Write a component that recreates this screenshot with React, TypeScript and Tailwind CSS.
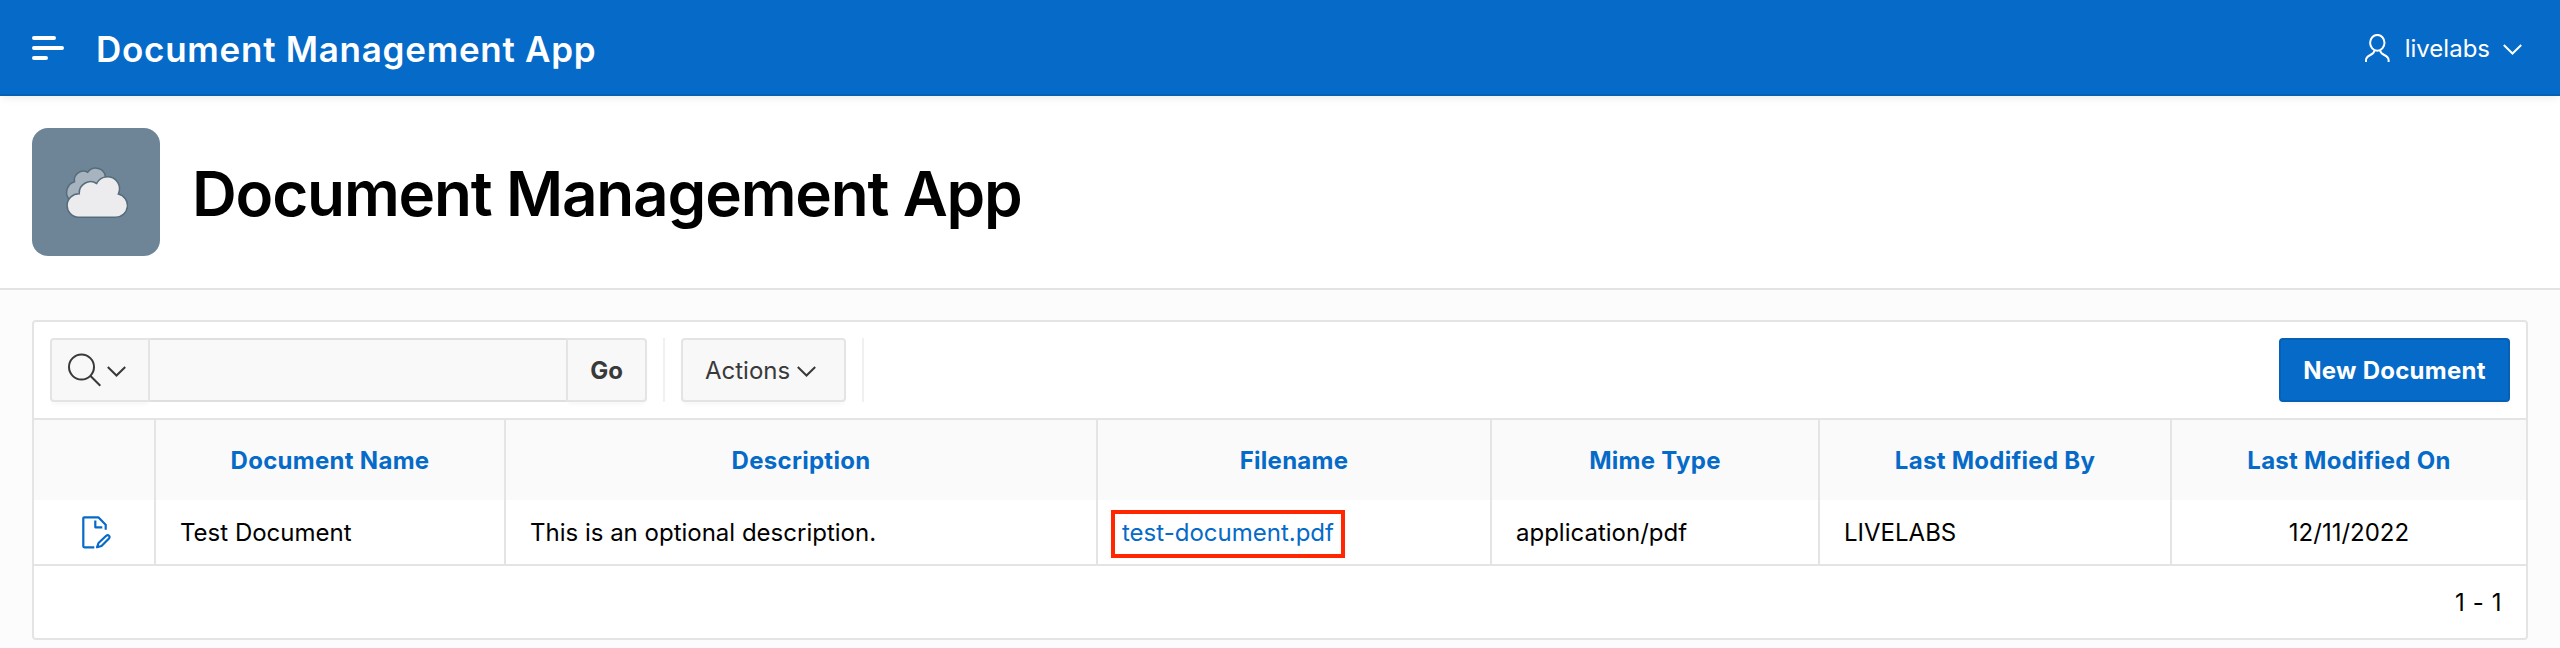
import React from "react";

const columns = [
  { title: "Document Name", cell: "Test Document", width: "w-[350px]" },
  { title: "Description", cell: "This is an optional description.", width: "w-[592px]" },
  { title: "Filename", cell: "test-document.pdf", width: "w-[394px]", link: true },
  { title: "Mime Type", cell: "application/pdf", width: "w-[328px]" },
  { title: "Last Modified By", cell: "LIVELABS", width: "w-[352px]" },
  { title: "Last Modified On", cell: "12/11/2022", width: "w-[356px]", centered: true },
];

function Chevron({ className }: { className?: string }) {
  return (
    <svg className={className} width="19" height="11" viewBox="0 0 19 11" fill="none" stroke="currentColor" strokeWidth="2">
      <path d="M.8 1 9.500 9.500 18.200 1" />
    </svg>
  );
}

function MenuIcon() {
  return (
    <svg width="32" height="24" viewBox="0 0 32 24" fill="none" stroke="currentColor" strokeWidth="4" strokeLinecap="round">
      <path d="M2 2H22M2 12H30M2 22H14" />
    </svg>
  );
}

function UserIcon() {
  return (
    <svg width="25" height="28" viewBox="0 0 25 28" fill="none" stroke="currentColor" strokeWidth="2">
      <ellipse cx="12.300" cy="8.800" rx="7.200" ry="7.900" />
      <path d="M1 28V26C1 20.500 9.500 21.500 9.500 16.200M23.600 28V26C23.600 20.500 15.100 21.500 15.100 16.200" />
    </svg>
  );
}

function CloudsIcon() {
  return (
    <svg width="64" height="64" viewBox="0 0 64 64" stroke="#566c7b" strokeWidth="1.500">
      <path fill="#a7b4c0" d="M4.500 38.500A11 11 0 0 1 10.500 21.800 9 9 0 0 1 23.700 12.300 9.800 9.800 0 0 1 41.500 17L36 40Z" />
      <path fill="#ececee" d="M14.500 57.300A11.800 11.800 0 0 1 15.300 33.700 11.300 11.300 0 0 1 32.700 23.500 12 12 0 0 1 54.300 34 11.800 11.800 0 0 1 51.500 57.300Z" />
    </svg>
  );
}

function EditDocumentIcon() {
  return (
    <svg width="29" height="33" viewBox="0 0 29 33" fill="none" stroke="currentColor" strokeWidth="2.200" strokeLinejoin="round">
      <path d="M12.300 31.300H2.300A1 1 0 0 1 1.300 30.300V2.300A1 1 0 0 1 2.300 1.300H16.300L23.700 8.700V13.800" />
      <path d="M13.300 4.500V11.300H20.300" />
      <path d="M15 31.300 16.500 27 24.200 19.800C26.300 18.300 28.500 20.300 27 22.500L19.500 30Z" />
    </svg>
  );
}

export default function App() {
  return (
    <div className="flex h-[648px] w-[2560px] flex-col overflow-hidden bg-[#fcfcfc] font-['Inter',sans-serif] text-[24px] text-black">
      <header className="relative z-10 flex h-24 shrink-0 items-center bg-[#056ac8] pl-8 pr-[38px] text-white shadow-[inset_0_-2px_0_#0560b6,0_4px_8px_-2px_rgba(0,0,0,0.08)]">
        <MenuIcon />
        <span className="ml-8 pt-0.5 text-[35px] font-semibold leading-[48px] tracking-[0.73px]">Document Management App</span>
        <div className="ml-auto flex items-center">
          <UserIcon />
          <span className="ml-[15px] pt-0.5">livelabs</span>
          <Chevron className="ml-[13px] mt-[3px]" />
        </div>
      </header>
      <section className="flex h-[194px] shrink-0 items-center border-b-2 border-[#e3e3e3] bg-white px-8">
        <div className="flex size-32 items-center justify-center rounded-2xl bg-[#6e8598]">
          <CloudsIcon />
        </div>
        <h1 className="ml-8 mt-1 text-[62px] font-semibold leading-none tracking-[-0.019em]">Document Management App</h1>
      </section>
      <main className="px-8 pt-[30px]">
        <div className="h-80 rounded border-2 border-[#e4e4e4] bg-white">
          <div className="flex h-[98px] items-center border-b-2 border-[#e4e4e4] px-4 text-[#393939]">
            <div className="flex h-16 w-[597px]">
              <div className="flex w-[100px] items-center rounded-l border-2 border-[#e4e4e4] bg-[#f8f8f8] pl-4 shadow-[0_4px_4px_-2px_rgba(0,0,0,0.04)]">
                <svg width="34" height="34" viewBox="0 0 34 34" fill="none" stroke="currentColor" strokeWidth="2">
                  <circle cx="13.500" cy="14" r="12.500" />
                  <path d="m22.300 22.800 10 10" />
                </svg>
                <Chevron className="ml-[5px] mt-[3px]" />
              </div>
              <div className="grow border-y-2 border-[#dfdfdf] bg-[#f9f9f9]" />
              <div className="flex w-[81px] items-center justify-center rounded-r border-2 border-[#e4e4e4] bg-[#f8f8f8] pt-0.5 font-bold shadow-[0_4px_4px_-2px_rgba(0,0,0,0.04)]">Go</div>
            </div>
            <div className="ml-4 h-16 w-0.5 bg-[#f0f0f0]" />
            <div className="ml-4 flex h-16 w-[165px] items-center rounded border-2 border-[#e4e4e4] bg-[#f8f8f8] pl-[22px] shadow-[0_4px_4px_-2px_rgba(0,0,0,0.04)]">
              <span className="pt-0.5">Actions</span>
              <Chevron className="ml-[7px] mt-[3px]" />
            </div>
            <div className="ml-4 h-16 w-0.5 bg-[#f0f0f0]" />
            <div className="ml-auto flex h-16 w-[231px] items-center justify-center rounded border-2 border-[#0560b6] bg-[#056ac8] pt-0.5 font-bold tracking-[0.25px] text-white shadow-[0_4px_4px_-2px_rgba(0,0,0,0.04)]">New Document</div>
          </div>
          <div className="flex h-36">
            <div className="flex w-[120px] flex-col">
              <div className="h-20 bg-[#fafafa]" />
              <div className="flex h-16 items-center justify-center pl-1 text-[#056ac8]">
                <EditDocumentIcon />
              </div>
            </div>
            {columns.map((c) => (
              <div key={c.title} className={`${c.width} border-l-2 border-[#e4e4e4]`}>
                <div className="flex h-20 items-center justify-center bg-[#fafafa] pt-0.5 font-bold tracking-[0.28px] text-[#056ac8]">{c.title}</div>
                <div className={`relative flex h-16 items-center px-6 pt-0.5 ${c.centered ? "justify-center" : ""}`}>
                  <span className={c.link ? "text-[#056ac8]" : ""}>{c.cell}</span>
                  {c.link && <div className="absolute left-[13px] top-2.5 h-12 w-[234px] border-4 border-[#ff2600]" />}
                </div>
              </div>
            ))}
          </div>
          <div className="flex h-[74px] items-center justify-end border-t-2 border-[#e4e4e4] px-6 pt-0.5 tracking-[0.6px]">1 - 1</div>
        </div>
      </main>
    </div>
  );
}
